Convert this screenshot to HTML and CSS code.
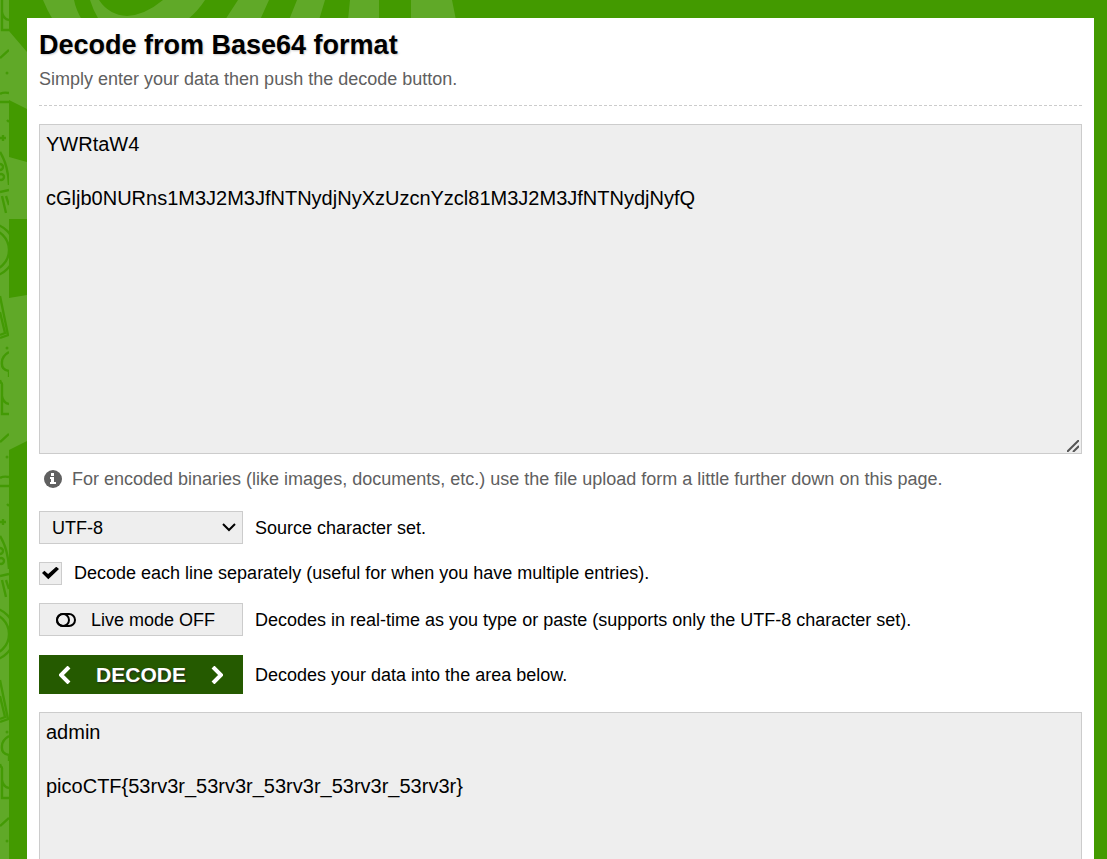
FILE: index.html
```html
<!DOCTYPE html>
<html lang="en">
<head>
<meta charset="utf-8">
<title>Base64 Decode</title>
<link rel="stylesheet" href="styles.css">
</head>
<body>
<svg class="backdrop" aria-hidden="true">
  <defs>
    <pattern id="doodles" width="9" height="384" patternUnits="userSpaceOnUse">
      <rect width="9" height="384" fill="#60a928"/>
      <g fill="none" stroke="#439a04" stroke-width="2.4">
        <path d="M2 0V12Q3 19 9 20M2 9V30H9M0 58L9 50M0 94Q3 92 9 93M0 102H9M0 138H6M3 135V141M0 152Q8 165 9 185M0 192L9 190M2 196L6 213M6 196L9 205M0 296L8 335L0 338M0 312L5 333L0 335M9 352Q2 356 2 362Q1 370 9 371M9 372V377M0 380Q1 384 3 384M7 120L9 122"/>
        <circle cx="1" cy="177" r="3"/><circle cx="0" cy="167" r="3"/>
        <circle cx="-12" cy="250" r="21"/><circle cx="-12" cy="250" r="27"/>
      </g>
      <circle cx="7" cy="73" r="1.5" fill="#459a08"/><circle cx="7" cy="348" r="1.5" fill="#459a08"/>
    </pattern>
  </defs>
  <g fill="#60a928">
    <path d="M43 0Q47 10 53 20H82Q76 10 74 0Z"/>
    <path d="M90 0Q93 10 99 20H187Q198 11 205 0H163Q145 15 127 16Q109 15 99 0Z"/>
    <path d="M238 0H269L260 20H225ZM297 0H325L319 20H289ZM350 0H379V20H348ZM411 0H452L456 20H411Z"/>
    <path d="M9 31L27 52V109L9 100ZM9 157L27 162V219H9ZM9 298L27 295V441L9 450Z"/>
  </g>
  <rect width="9" height="100%" fill="url(#doodles)"/>
</svg>
<main class="panel">
  <header class="intro">
    <h1 class="title">Decode from Base64 format</h1>
    <p class="subtitle">Simply enter your data then push the decode button.</p>
  </header>
  <form class="decoder">
    <div class="source">
      <textarea class="area" id="input" aria-label="Data to decode" spellcheck="false">YWRtaW4

cGljb0NURns1M3J2M3JfNTNydjNyXzUzcnYzcl81M3J2M3JfNTNydjNyfQ</textarea>
      <svg class="grip" viewBox="0 0 12 12" aria-hidden="true"><path d="M0 12L12 0M6 12L12 6"/></svg>
    </div>
    <p class="hint">
      <svg class="info" viewBox="0 0 18 18" aria-hidden="true"><circle cx="9" cy="9" r="9" fill="#606060"/><path fill="#fff" d="M7 3H10V6H7ZM6 7H10V12H12V14H6V12H7V9H6Z"/></svg>
      <span>For encoded binaries (like images, documents, etc.) use the file upload form a little further down on this page.</span>
    </p>
    <div class="row charset">
      <span class="picker">
        <select class="control" id="charset"><option>UTF-8</option><option>ASCII</option></select>
        <svg class="chevron" viewBox="0 0 14 10" aria-hidden="true"><path d="M1 1L7 7L13 1"/></svg>
      </span>
      <label for="charset">Source character set.</label>
    </div>
    <div class="row lines">
      <input class="check" type="checkbox" id="lines" checked>
      <label for="lines">Decode each line separately (useful for when you have multiple entries).</label>
    </div>
    <div class="row live">
      <button class="control toggle" type="button" id="live">
        <svg class="switch" viewBox="0 0 20 14" aria-hidden="true"><rect x="1" y="1" width="18" height="12" rx="6"/><circle cx="7" cy="7" r="6"/></svg>
        <span>Live mode OFF</span>
      </button>
      <label for="live">Decodes in real-time as you type or paste (supports only the UTF-8 character set).</label>
    </div>
    <div class="row submit">
      <button class="decode" type="button" id="decode">
        <svg class="arrow" viewBox="0 0 12 18" aria-hidden="true"><path d="M10 1L2 9L10 17"/></svg>
        <span>DECODE</span>
        <svg class="arrow" viewBox="0 0 12 18" aria-hidden="true"><path d="M2 1L10 9L2 17"/></svg>
      </button>
      <label for="decode">Decodes your data into the area below.</label>
    </div>
    <textarea class="area" aria-label="Decoded data" spellcheck="false" readonly>admin

picoCTF{53rv3r_53rv3r_53rv3r_53rv3r_53rv3r}</textarea>
  </form>
</main>
</body>
</html>
```
FILE: styles.css
```css
* { box-sizing: border-box; }
body {
  margin: 0;
  height: 100vh;
  overflow: hidden;
  background: #439a00;
  color: #000;
  font: 18px/24px "Liberation Sans", Arial, sans-serif;
}
.backdrop { position: absolute; inset: 0; width: 100%; height: 100%; }
.panel {
  position: relative;
  margin: 18px 13px 0 27px;
  padding: 10px 12px;
  background: #fff;
}
.intro { padding-bottom: 14px; border-bottom: 1px dashed #ccc; }
.title { margin: 0; font-size: 27px; line-height: 34px; text-shadow: 1px 1px 2px #ccc; }
.subtitle { margin: 5px 0 0; color: #606060; }
.decoder { padding-top: 18px; }
.source { position: relative; }
.area {
  display: block;
  width: 100%;
  height: 330px;
  margin: 0;
  padding: 6px;
  border: 1px solid #ccc;
  border-radius: 0;
  background: #eee;
  color: #000;
  font: 20px/27px "Liberation Sans", Arial, sans-serif;
  resize: none;
  outline: 0;
}
.grip { position: absolute; right: 3px; bottom: 2px; width: 12px; height: 12px; fill: none; stroke: #555; stroke-width: 2; }
.hint { display: flex; align-items: center; gap: 10px; margin: 13px 0 0 5px; color: #606060; }
.info { width: 18px; height: 18px; flex: none; }
.row { display: flex; align-items: center; gap: 12px; }
.charset { margin-top: 20px; }
.lines { margin-top: 17px; }
.live { margin-top: 18px; }
.submit { margin: 19px 0 18px; }
.control {
  display: block;
  width: 204px;
  height: 33px;
  padding: 0 12px;
  border: 1px solid #ccc;
  border-radius: 0;
  background: #eee;
  color: #000;
  font: inherit;
  appearance: none;
}
.picker { position: relative; }
.chevron { position: absolute; right: 7px; top: 12px; width: 14px; height: 10px; fill: none; stroke: #000; stroke-width: 2; pointer-events: none; }
.check {
  width: 23px;
  height: 23px;
  margin: 0;
  border: 1px solid #ccc;
  background: #eee;
  appearance: none;
  display: grid;
  place-items: center;
}
.check:checked::before {
  content: "";
  width: 17px;
  height: 13px;
  background: #000;
  clip-path: polygon(0 50%, 14% 32%, 36% 58%, 84% 2%, 100% 20%, 37% 98%);
}
.toggle { display: flex; align-items: center; gap: 15px; padding: 0 16px; }
.switch { width: 20px; height: 14px; fill: none; stroke: #000; stroke-width: 2; }
.decode {
  display: flex;
  align-items: center;
  justify-content: space-between;
  width: 204px;
  height: 39px;
  padding: 0 20px;
  border: 0;
  background: #255a00;
  color: #fff;
  font: bold 21px/24px "Liberation Sans", Arial, sans-serif;
  text-shadow: 1px 1px 2px #222;
}
.arrow { width: 12px; height: 18px; fill: none; stroke: #fff; stroke-width: 4; }
```
